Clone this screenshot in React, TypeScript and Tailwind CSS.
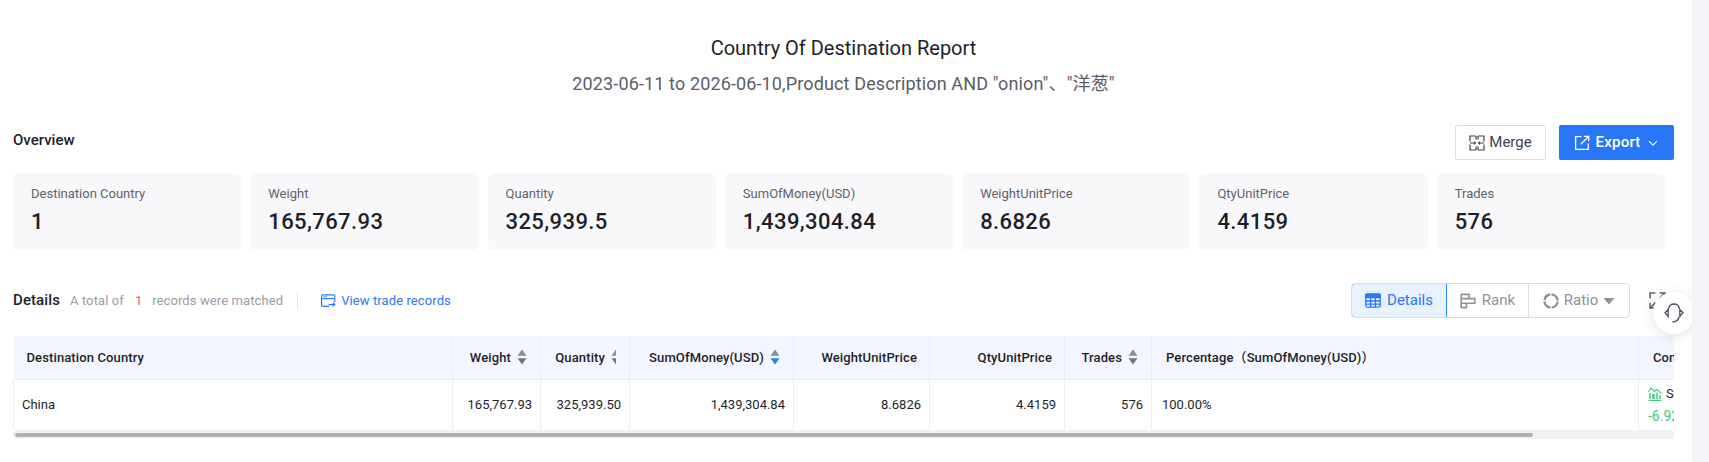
const FONT = "font-['Roboto','Noto_Sans_CJK_SC',sans-serif]";

const STATS = [
  { label: "Destination Country", value: "1" },
  { label: "Weight", value: "165,767.93" },
  { label: "Quantity", value: "325,939.5" },
  { label: "SumOfMoney(USD)", value: "1,439,304.84" },
  { label: "WeightUnitPrice", value: "8.6826" },
  { label: "QtyUnitPrice", value: "4.4159" },
  { label: "Trades", value: "576" },
];

function SortIcon({ active = false, clip = false }: { active?: boolean; clip?: boolean }) {
  return (
    <span className={clip ? "ml-[6px] w-[5px] shrink-0 overflow-hidden" : "ml-[6px] w-[10px] shrink-0 overflow-hidden"}>
      <svg width="10" height="16" viewBox="0 0 10 16" className="block">
        <path d="M5 0.5 L9.5 6.8 H0.5 Z" fill="#8a8d96" />
        <path d="M5 15.5 L9.5 9.2 H0.5 Z" fill={active ? "#1f86f0" : "#73767f"} />
      </svg>
    </span>
  );
}

function MergeIcon() {
  return (
    <svg width="16" height="16" viewBox="0 0 16 16" fill="none" stroke="#3f4250" strokeWidth="1.2">
      <path d="M7 1H1v5.5M7 15H1V9.5M9 1h6v5.5M9 15h6V9.5M7 1v3.5M9 1v3.5M7 15v-3.5M9 15v-3.5M1 8h4M15 8h-4" />
      <path d="M5 6.8 6.4 8 5 9.2M11 6.8 9.6 8 11 9.2" />
    </svg>
  );
}

function ExportIcon() {
  return (
    <svg width="16" height="16" viewBox="0 0 16 16" fill="none" stroke="#fff" strokeWidth="1.3">
      <path d="M7.5 1.7H1.6v12.7h12.7V8.5" />
      <path d="M6.8 9.2 14.2 1.8M9.8 1.3h4.9v4.9" />
    </svg>
  );
}

function RecordsIcon() {
  return (
    <svg width="15" height="14" viewBox="0 0 15 14" fill="none" stroke="#2b78f5" strokeWidth="1.2">
      <path d="M8 12.4H1.6a1 1 0 0 1-1-1V1.8a1 1 0 0 1 1-1h11.2a1 1 0 0 1 1 1V8" />
      <path d="M.8 4.6h12.8" />
      <path d="M2.4 2.7h1.2M4.6 2.7h1.2" />
      <path d="M7.6 10.6h6.2M11.8 8.8l2 1.8-2 1.8" />
    </svg>
  );
}

function TableIcon() {
  return (
    <svg width="16" height="15" viewBox="0 0 16 15" fill="none" stroke="#2b78f5" strokeWidth="1.3">
      <rect x="0.8" y="0.8" width="14.4" height="13.4" rx="1.5" />
      <path d="M0.8 1.5h14.4v3.2H0.8z" fill="#2b78f5" />
      <path d="M0.8 8h14.4M0.8 11.1h14.4M5.6 4.7v9.5M10.4 4.7v9.5" />
    </svg>
  );
}

function RankIcon() {
  return (
    <svg width="16" height="16" viewBox="0 0 16 16" fill="none" stroke="#8f9197" strokeWidth="1.6">
      <path d="M1.2 1v14" />
      <path d="M1.2 1.4h8v4.2h-8M1.2 5.6h13.6v4.6H1.2M1.2 10.2h5.2v4.4H1.2" />
    </svg>
  );
}

function RatioIcon() {
  return (
    <svg width="16" height="16" viewBox="0 0 16 16" fill="none" stroke="#8f9197" strokeWidth="2.4">
      <path d="M8.4 1.4a6.6 6.6 0 0 1 6.2 6.2" />
      <path d="M14.6 8.7a6.6 6.6 0 0 1-6 5.9" />
      <path d="M7.4 14.6A6.6 6.6 0 0 1 1.4 8.4" />
      <path d="M1.5 7.2A6.6 6.6 0 0 1 7.2 1.5" />
    </svg>
  );
}

function ExpandIcon() {
  return (
    <svg width="17" height="17" viewBox="0 0 16 16" fill="none" stroke="#5b5e68" strokeWidth="1.4">
      <path d="M1 6V1h5M10 1h5v5M15 10v5h-5M6 15H1v-5" />
      <path d="M1.5 14.5 6 10M14.5 1.5 10 6" />
    </svg>
  );
}

function HeadsetIcon() {
  return (
    <svg width="22" height="22" viewBox="0 0 22 22" fill="none" stroke="#50535e" strokeWidth="1.3">
      <path d="M5.5 7C6 4 8 2 11 2s5 2 5.5 5" />
      <path d="M5.2 7.5 2 10.8 5.2 14.5V7.5ZM16.8 7.5 20 10.8 16.8 14.5V7.5Z" />
      <path d="M16 15c-.8 3-3 4.8-6.5 5" />
    </svg>
  );
}

function TrendIcon() {
  return (
    <svg width="14" height="14" viewBox="0 0 14 14" fill="none" stroke="#3ecb88" strokeWidth="1.1">
      <path d="M0.5 5 3 1l3.5 3.5L9 2.5 13.5 6.5" />
      <path d="M0.5 13.4h13" strokeWidth="1.2" />
      <path d="M2 6v6M5 7v5M5.9 7v5M9 5.5v6.5M12 8v4" strokeWidth="1.5" />
    </svg>
  );
}

export default function App() {
  return (
    <div className={`${FONT} flex h-[462px] w-full overflow-hidden bg-white text-[#1f2330]`}>
      <main className="relative min-w-0 flex-1 pl-[13px] pr-[18px]">
        <div className="pt-[34px] text-center">
          <h1 className="text-[20px] leading-[28px] text-[#1c1f2a]">Country Of Destination Report</h1>
          <p className="mt-[9px] text-[18px] leading-[26px] tracking-[0.13px] text-[#5a5d68]">
            2023-06-11 to 2026-06-10,Product Description AND "onion"、"洋葱"
          </p>
        </div>

        <div className="mt-[28px] flex h-[35px] items-center justify-between">
          <h2 className="-mt-[5px] text-[15px] font-medium leading-[20px] text-[#1c1f2a]">Overview</h2>
          <div className="flex items-center gap-[13px]">
            <button className="flex h-[35px] w-[91px] items-center justify-center gap-[4px] rounded-[2px] border border-[#dcdde2] bg-white text-[15px] text-[#3f4250]">
              <MergeIcon />
              Merge
            </button>
            <button className="flex h-[35px] w-[115px] items-center justify-center gap-[5px] rounded-[2px] bg-[#2877f6] text-[15px] font-medium tracking-[0.25px] text-white">
              <ExportIcon />
              Export
              <svg width="12" height="12" viewBox="0 0 12 12" fill="none" stroke="#fff" strokeWidth="1.1" className="ml-[1px]">
                <path d="M2 4.2 6 8.2l4-4" />
              </svg>
            </button>
          </div>
        </div>

        <div className="mt-[13px] grid grid-cols-7 gap-[9px] pr-[9px]">
          {STATS.map((s) => (
            <div key={s.label} className="h-[77px] rounded-[6px] bg-[#f8f8fb] pl-[18px] pt-[12px]">
              <div className="text-[13px] leading-[18px] text-[#5f626c]">{s.label}</div>
              <div className="mt-[5px] text-[22px] font-medium leading-[28px] tracking-[0.4px] text-[#1c1f2a]">{s.value}</div>
            </div>
          ))}
        </div>

        <div className="mt-[33px] flex h-[35px] items-center">
          <h2 className="text-[15px] font-medium tracking-[0.1px] text-[#1c1f2a]">Details</h2>
          <span className="ml-[10px] text-[13px] tracking-[0.1px] text-[#9a9ca6]">A total of</span>
          <span className="ml-[11px] text-[13px] text-[#f0506e]">1</span>
          <span className="ml-[10px] text-[13px] tracking-[0.1px] text-[#9a9ca6]">records were matched</span>
          <span className="ml-[14px] h-[18px] w-px bg-[#e6e7ea]" />
          <a className="ml-[23px] flex items-center gap-[5px] text-[13px] tracking-[0.1px] text-[#2b78f5]">
            <RecordsIcon />
            View trade records
          </a>
          <div className="ml-auto flex items-center">
            <div className="flex h-[35px] overflow-hidden rounded-[4px] border border-[#dcdde2] text-[15px]">
              <button className="-m-px flex w-[96px] items-center justify-center gap-[6px] rounded-l-[4px] border border-[#2e8cf0] bg-[#e8f1fe] text-[#2b78f5]">
                <TableIcon />
                Details
              </button>
              <button className="ml-px flex w-[82px] items-center justify-center gap-[6px] border-r border-[#dcdde2] text-[#8f9197]">
                <RankIcon />
                Rank
              </button>
              <button className="flex w-[100px] items-center justify-center gap-[5px] text-[#8f9197]">
                <RatioIcon />
                Ratio
                <svg width="12" height="8" viewBox="0 0 12 8"><path d="M0.5 1h11L6 7.5z" fill="#8f9197" /></svg>
              </button>
            </div>
            <span className="ml-[19px] mr-[8px]"><ExpandIcon /></span>
          </div>
        </div>

        <div className="mt-[18px] overflow-hidden">
          <table className="w-[1700px] table-fixed border-collapse text-[13px]">
            <colgroup>
              <col className="w-[439px]" />
              <col className="w-[88px]" />
              <col className="w-[89px]" />
              <col className="w-[164px]" />
              <col className="w-[136px]" />
              <col className="w-[135px]" />
              <col className="w-[87px]" />
              <col className="w-[487px]" />
              <col className="w-[75px]" />
            </colgroup>
            <thead>
              <tr className="h-[43px] bg-[#f3f6fe] text-[13px] font-medium tracking-[0.12px] text-[#1c1f2a]">
                <th className="border-b border-[#eceef3] pl-[13px] text-left font-medium">Destination Country</th>
                <th className="border-b border-l border-[#eceef3] pr-[13px] font-medium">
                  <span className="flex items-center justify-end">Weight<SortIcon /></span>
                </th>
                <th className="border-b border-l border-[#eceef3] pr-[13px] font-medium">
                  <span className="flex items-center justify-end">Quantity<SortIcon clip /></span>
                </th>
                <th className="border-b border-l border-[#eceef3] pr-[13px] font-medium">
                  <span className="flex items-center justify-end">SumOfMoney(USD)<SortIcon active /></span>
                </th>
                <th className="border-b border-l border-[#eceef3] pr-[12px] text-right font-medium">WeightUnitPrice</th>
                <th className="border-b border-l border-[#eceef3] pr-[12px] text-right font-medium">QtyUnitPrice</th>
                <th className="border-b border-l border-[#eceef3] pr-[13px] font-medium">
                  <span className="flex items-center justify-end">Trades<SortIcon /></span>
                </th>
                <th className="border-b border-l border-[#eceef3] pl-[14px] text-left font-medium">Percentage（SumOfMoney(USD)）</th>
                <th className="border-b border-l border-[#eceef3] pl-[14px] text-left font-medium">Compare</th>
              </tr>
            </thead>
            <tbody>
              <tr className="h-[51px] text-[13px] text-[#1c1f2a]">
                <td className="border-l border-[#eceef3] pl-[8px]">China</td>
                <td className="border-l border-[#eceef3] pr-[8px] text-right">165,767.93</td>
                <td className="border-l border-[#eceef3] pr-[8px] text-right">325,939.50</td>
                <td className="border-l border-[#eceef3] pr-[8px] text-right">1,439,304.84</td>
                <td className="border-l border-[#eceef3] pr-[8px] text-right">8.6826</td>
                <td className="border-l border-[#eceef3] pr-[8px] text-right">4.4159</td>
                <td className="border-l border-[#eceef3] pr-[8px] text-right">576</td>
                <td className="border-l border-[#eceef3] pl-[10px]">100.00%</td>
                <td className="whitespace-nowrap border-l border-[#eceef3] pl-[9px]">
                  <div className="flex items-center gap-[4px] leading-[20px]"><TrendIcon />Same</div>
                  <div className="mt-[2px] text-[14px] leading-[20px] text-[#3ecb88]">-6.92%</div>
                </td>
              </tr>
            </tbody>
          </table>
          <div className="h-[9px] rounded-[4px] bg-[#f1f1f1] pt-[3px]">
            <div className="ml-[2px] h-[4px] w-[1518px] rounded-[2px] bg-[#b0b0b0]" />
          </div>
        </div>

        <button className="absolute left-[1653px] top-[292px] flex h-[42px] w-[42px] items-center justify-center rounded-full bg-white shadow-[0_2px_12px_rgba(60,70,110,0.16)]">
          <HeadsetIcon />
        </button>
      </main>
      <div className="z-10 w-[17px] shrink-0 bg-[#f3f4fa]" />
    </div>
  );
}
